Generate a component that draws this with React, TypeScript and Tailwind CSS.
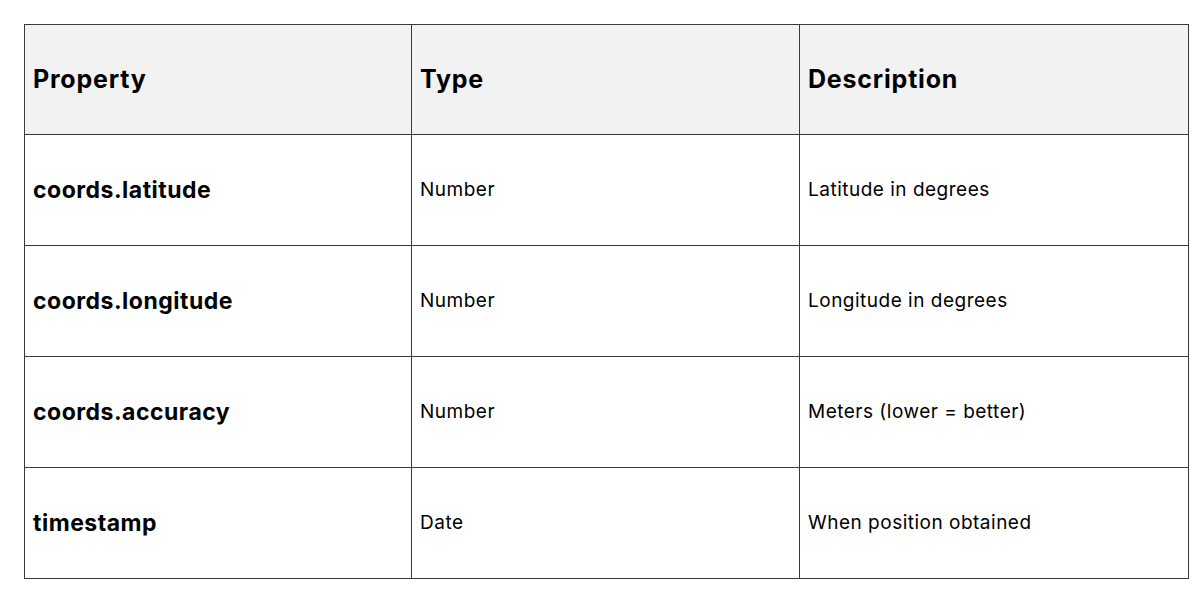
const rows = [
  { prop: "coords.latitude", type: "Number", desc: "Latitude in degrees" },
  { prop: "coords.longitude", type: "Number", desc: "Longitude in degrees" },
  { prop: "coords.accuracy", type: "Number", desc: "Meters (lower = better)" },
  { prop: "timestamp", type: "Date", desc: "When position obtained" },
];

function Cell({ children }: { children: React.ReactNode }) {
  return (
    <div className="flex items-center border-l border-[#3a3a3a] pl-[8px] first:border-l-0">
      {children}
    </div>
  );
}

export default function App() {
  return (
    <div className="h-[600px] w-[1200px] bg-white p-[24px] pr-[11px] font-['Inter',sans-serif] text-black">
      <div className="border border-[#3a3a3a]">
        {/* Header */}
        <div className="grid h-[109px] grid-cols-[386px_388px_1fr] bg-[#f2f2f2]">
          <Cell><span className="text-[25px] font-bold tracking-[0.8px]">Property</span></Cell>
          <Cell><span className="text-[25px] font-bold tracking-[0.8px]">Type</span></Cell>
          <Cell><span className="text-[25px] font-bold tracking-[0.8px]">Description</span></Cell>
        </div>
        {rows.map((r) => (
          <div key={r.prop} className="grid h-[111px] grid-cols-[386px_388px_1fr] border-t border-[#3a3a3a]">
            <Cell><span className="text-[23px] font-bold tracking-[0.5px]">{r.prop}</span></Cell>
            <Cell><span className="text-[19px] tracking-[0.5px]">{r.type}</span></Cell>
            <Cell><span className="text-[19px] tracking-[0.5px]">{r.desc}</span></Cell>
          </div>
        ))}
      </div>
    </div>
  );
}
